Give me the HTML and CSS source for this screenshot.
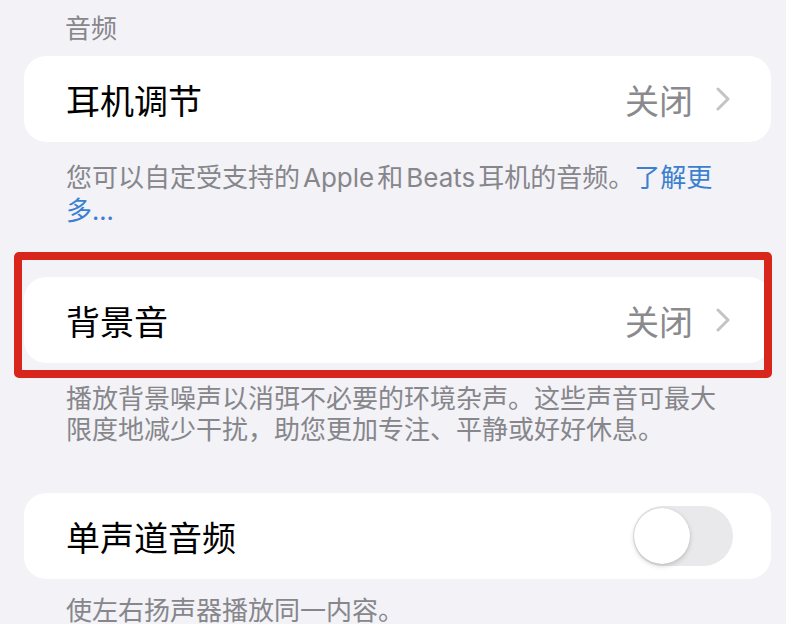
FILE: index.html
```html
<!DOCTYPE html>
<html lang="zh-CN">
<head>
  <meta charset="UTF-8">
  <meta name="viewport" content="width=device-width, initial-scale=1.0">
  <title>音频</title>
  <link rel="stylesheet" href="styles.css">
</head>
<body>
  <div class="group-title">音频</div>

  <!-- Headphone accommodations -->
  <div class="cell">
    <span class="cell-label">耳机调节</span>
    <span class="cell-value">关闭</span>
    <svg class="chevron" viewBox="0 0 14 24"><polyline points="2,2 12,12 2,22"/></svg>
  </div>
  <p class="group-footer footer-one">您可以自定受支持的<span class="latin">Apple</span>和<span class="latin">Beats</span>耳机的音频。<a href="#">了解更多...</a></p>

  <!-- Background sounds (marked) -->
  <div class="marked">
    <div class="cell">
      <span class="cell-label">背景音</span>
      <span class="cell-value">关闭</span>
      <svg class="chevron" viewBox="0 0 14 24"><polyline points="2,2 12,12 2,22"/></svg>
    </div>
    <div class="mark-box"></div>
  </div>
  <p class="group-footer footer-two">播放背景噪声以消弭不必要的环境杂声。这些声音可最大限度地减少干扰，助您更加专注、平静或好好休息。</p>

  <!-- Mono audio -->
  <div class="cell cell-mono">
    <span class="cell-label">单声道音频</span>
    <div class="switch"></div>
  </div>
  <p class="group-footer footer-three">使左右扬声器播放同一内容。</p>
</body>
</html>
```

FILE: styles.css
```css
/* Global */
body {
  margin: 0;
  padding: 0;
  background: #f2f2f7;
  font-family: "Noto Sans CJK SC", sans-serif;
  color: #000;
  overflow: hidden;
}

.group-title {
  padding: 11px 0 0 65px;
  font-size: 26px;
  line-height: 32px;
  color: #86868b;
}

/* Rows */
.cell {
  display: flex;
  align-items: center;
  height: 86px;
  margin: 13px 15px 0 24px;
  padding: 0 41px 0 42px;
  background: #fff;
  border-radius: 22px;
}

.cell-label {
  flex: 1;
  font-size: 34px;
}

.cell-value {
  font-size: 34px;
  color: #8a8a8e;
  margin-right: 23px;
}

.chevron {
  width: 14px;
  height: 24px;
}

.chevron polyline {
  fill: none;
  stroke: #c4c4c7;
  stroke-width: 3;
  stroke-linecap: round;
  stroke-linejoin: round;
}

/* Footers */
.group-footer {
  margin: 0;
  padding: 0 50px 0 66px;
  font-size: 26px;
  line-height: 31px;
  color: #86868b;
}

.group-footer .latin {
  display: inline-block;
  font-family: "Inter", sans-serif;
  margin: 0 3px;
}

.group-footer a {
  color: #3a7fd0;
  text-decoration: none;
}

.footer-one { margin-top: 18px; }
.footer-two { margin-top: 18px; }
.footer-three { margin-top: 14px; }

/* Red highlight around background sounds */
.marked {
  position: relative;
  margin-top: 53px;
}

.marked .cell {
  margin-top: 0;
}

.mark-box {
  position: absolute;
  top: -25px;
  bottom: -15px;
  left: 14px;
  right: 14px;
  border: 8px solid #d8261d;
  border-radius: 5px;
}

/* Toggle */
.cell-mono {
  margin-top: 50px;
  padding-right: 38px;
}

.switch {
  position: relative;
  width: 100px;
  height: 60px;
  border-radius: 30px;
  background: #e9e9eb;
}

.switch::after {
  content: "";
  position: absolute;
  top: 2px;
  left: 1px;
  width: 56px;
  height: 56px;
  border-radius: 50%;
  background: #fff;
  box-shadow: 0 2px 5px rgba(0, 0, 0, 0.18), 0 0 1px rgba(0, 0, 0, 0.15);
}
```
